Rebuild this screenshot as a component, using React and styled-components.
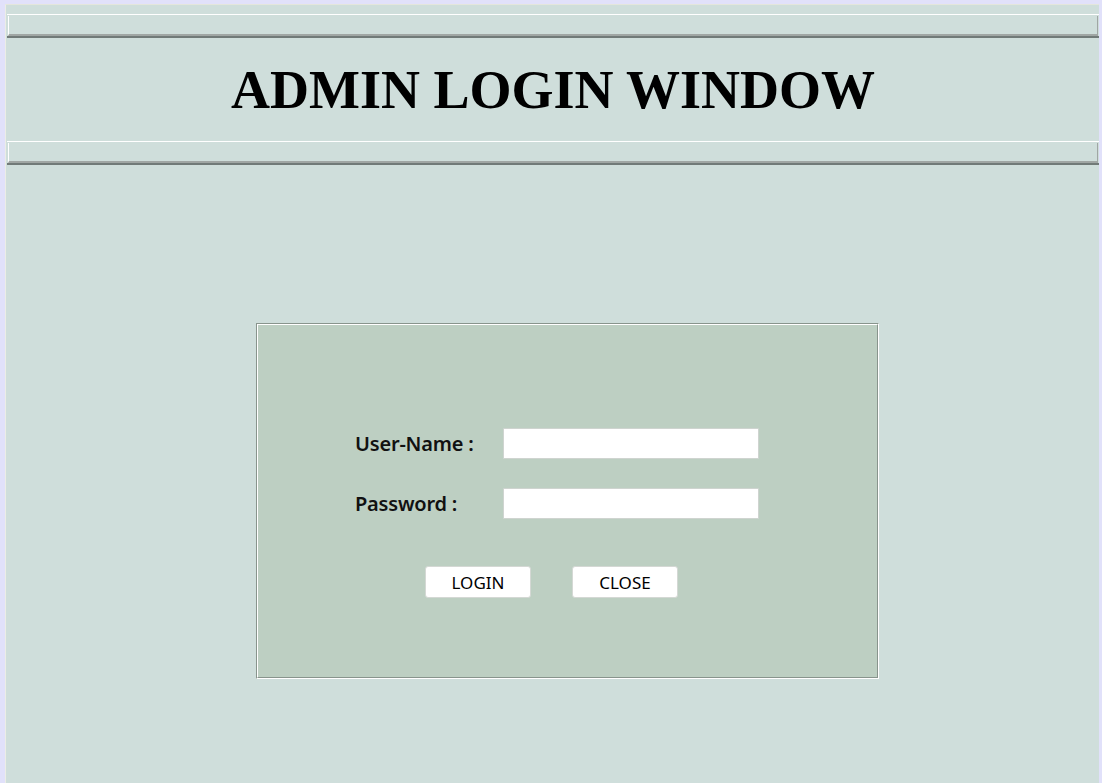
import React from 'react';
import styled, { createGlobalStyle } from 'styled-components';

const GlobalStyle = createGlobalStyle`
  html, body {
    margin: 0;
    padding: 0;
    height: 100%;
  }
  body {
    background: #e1e1fa;
    padding: 4px 3px 0 5px;
    box-sizing: border-box;
    overflow: hidden;
  }
  #root {
    height: 100%;
  }
`;

const Screen = styled.div`
  height: 100%;
  background: #cfdedb;
  border-left: 1px solid #ecede6;
  border-top: 1px solid #e4e6dc;
  box-sizing: border-box;
  padding: 9px 0 0 1px;
`;

const Rule = styled.div`
  border-top: 1px solid #ffffff;
  border-bottom: 2px solid #717a78;
  padding: 1px 0 0 1px;
`;

const RuleInner = styled.div`
  height: 18px;
  border-left: 1px solid #ffffff;
  border-right: 1px solid #a0a6a4;
  border-bottom: 2px solid #a0a6a4;
  margin-right: 1px;
`;

const Title = styled.h1`
  margin: 0;
  height: 103px;
  display: flex;
  align-items: center;
  justify-content: center;
  font-family: "Liberation Serif", "Times New Roman", serif;
  font-weight: bold;
  font-size: 54px;
  color: #000;
  padding-top: 1px;
  box-sizing: border-box;
`;

const Body = styled.div`
  padding: 158px 0 0 249px;
`;

const Panel = styled.div`
  width: 623px;
  height: 356px;
  box-sizing: border-box;
  border-style: solid;
  border-width: 1px;
  border-color: #88948c #ffffff #ffffff #88948c;
`;

const PanelInner = styled.div`
  height: 100%;
  box-sizing: border-box;
  background: #bdcfc2;
  border-style: solid;
  border-width: 1px;
  border-color: #ffffff #88948c #88948c #ffffff;
  padding: 103px 0 0 97px;
`;

const Row = styled.div`
  display: flex;
  align-items: center;
  height: 31px;
  margin-bottom: ${p => p.$gap}px;
`;

const Label = styled.label`
  width: 148px;
  font-family: "Noto Sans", "Open Sans", sans-serif;
  font-weight: 600;
  font-size: 20px;
  color: #111;
  letter-spacing: -0.2px;
`;

const Input = styled.input`
  width: 256px;
  height: 31px;
  box-sizing: border-box;
  border: 1px solid #cfd4d0;
  background: #fff;
  border-radius: 1px;
  outline: none;
  padding: 0 4px;
  font-size: 15px;
`;

const Buttons = styled.div`
  display: flex;
  gap: 41px;
  padding-left: 70px;
`;

const Button = styled.button`
  width: 106px;
  height: 32px;
  box-sizing: border-box;
  background: #ffffff;
  border: 1px solid #d4d8d4;
  border-radius: 3px;
  font-family: "Noto Sans", "Open Sans", sans-serif;
  font-size: 17px;
  color: #000;
  padding: 0;
  cursor: pointer;
`;

export default function App() {
  return (
    <>
      <GlobalStyle />
      <Screen>
        <Rule>
          <RuleInner />
        </Rule>
        <Title>ADMIN LOGIN WINDOW</Title>
        <Rule>
          <RuleInner />
        </Rule>
        <Body>
          <Panel>
            <PanelInner>
              <Row $gap={29}>
                <Label>User-Name :</Label>
                <Input type="text" />
              </Row>
              <Row $gap={47}>
                <Label>Password :</Label>
                <Input type="password" />
              </Row>
              <Buttons>
                <Button>LOGIN</Button>
                <Button>CLOSE</Button>
              </Buttons>
            </PanelInner>
          </Panel>
        </Body>
      </Screen>
    </>
  );
}
